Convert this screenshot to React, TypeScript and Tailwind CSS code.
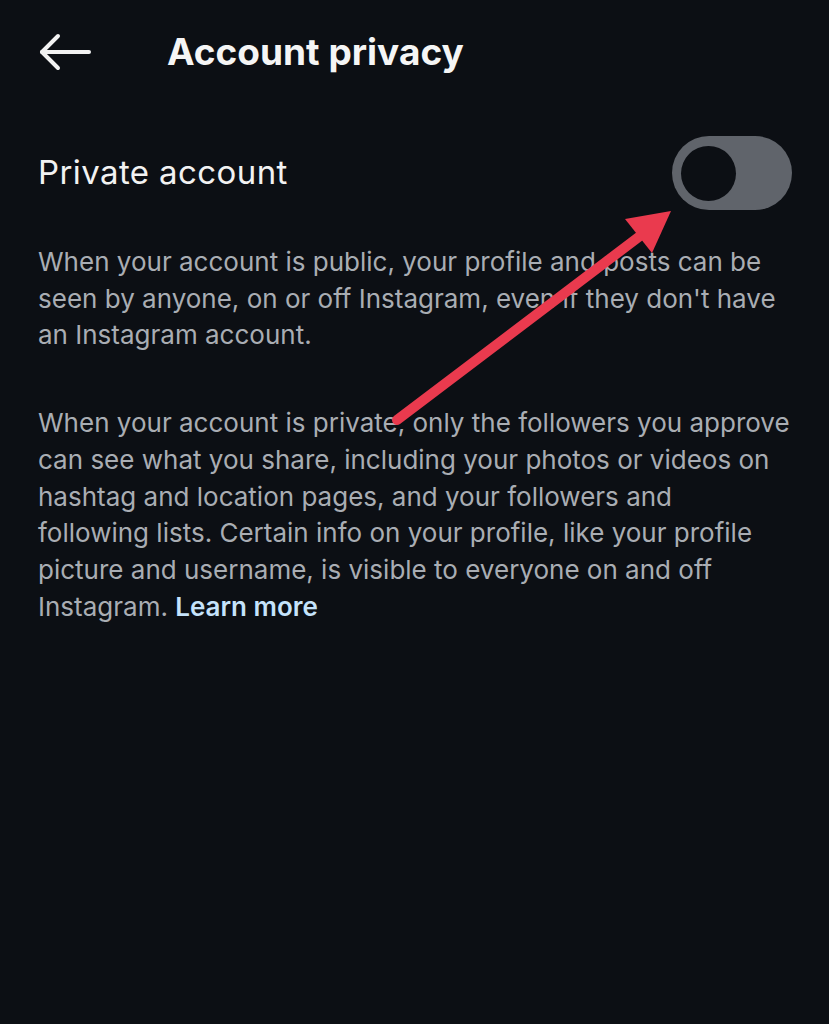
import React from "react";

export default function App() {
  return (
    <div
      className="relative w-[829px] h-[1024px] bg-[#0c0f14] overflow-hidden"
      style={{ fontFamily: "Inter, Roboto, 'Noto Sans', sans-serif" }}
    >
      <div className="flex items-center h-[104px] pl-[38px]">
        <svg width="54" height="40" viewBox="0 0 54 40" fill="none" stroke="#f2f2f2" strokeWidth="4" strokeLinecap="round" strokeLinejoin="round">
          <path d="M51 20H4" />
          <path d="M20 4L4 20L20 36" />
        </svg>
        <h1 className="ml-[75px] text-[37px] font-bold text-[#f5f5f5]">Account privacy</h1>
      </div>

      <div className="flex items-center justify-between pl-[38px] pr-[37px] mt-[32px]">
        <span className="text-[33px] text-[#f2f2f2] tracking-[0.4px]">Private account</span>
        <div className="w-[120px] h-[74px] rounded-full bg-[#60646b] flex items-center pl-[9px]">
          <div className="w-[55px] h-[55px] rounded-full bg-[#0c0f14]" />
        </div>
      </div>

      <div className="pl-[38px] pr-[20px] mt-[34px] text-[26px] leading-[36.7px] text-[#a9adb3] whitespace-nowrap">
        <p>
          When your account is public, your profile and posts can be
          <br />
          seen by anyone, on or off Instagram, even if they don't have
          <br />
          an Instagram account.
        </p>
        <p className="mt-[51px]">
          When your account is private, only the followers you approve
          <br />
          can see what you share, including your photos or videos on
          <br />
          hashtag and location pages, and your followers and
          <br />
          following lists. Certain info on your profile, like your profile
          <br />
          picture and username, is visible to everyone on and off
          <br />
          Instagram. <span className="text-[#c5e3fb] font-semibold">Learn more</span>
        </p>
      </div>

      <svg className="absolute left-0 top-0" width="829" height="1024" viewBox="0 0 829 1024">
        <line x1="397" y1="420" x2="640" y2="236" stroke="#ea3a4e" strokeWidth="10" strokeLinecap="round" />
        <polygon points="671,211 625,219 652,253" fill="#ea3a4e" />
      </svg>
    </div>
  );
}
